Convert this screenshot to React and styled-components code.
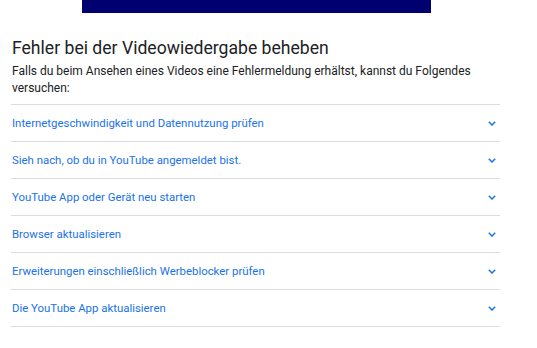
import React from "react";
import styled, { createGlobalStyle } from "styled-components";

const Global = createGlobalStyle`
  html, body { margin: 0; padding: 0; background: #fff; }
  body { font-family: Roboto, "Liberation Sans", sans-serif; }
`;

const Page = styled.div`
  width: 537px;
  height: 348px;
  overflow: hidden;
  display: flex;
  flex-direction: column;
`;

const Banner = styled.div`
  margin-left: 82px;
  width: 349px;
  height: 13px;
  background: #000070;
`;

const Content = styled.div`
  padding: 23px 37px 0 11px;
  display: flex;
  flex-direction: column;
`;

const Title = styled.h2`
  margin: 0 0 0 1px;
  font-family: Roboto, "Liberation Sans", sans-serif;
  font-weight: 400;
  font-size: 17.6px;
  line-height: 24px;
  color: #202124;
`;

const Intro = styled.p`
  margin: 3px 0 7px 1px;
  font-size: 12px;
  line-height: 17px;
  color: #202124;
`;

const List = styled.div`
  border-top: 1px solid #dadce0;
  display: flex;
  flex-direction: column;
`;

const Row = styled.div`
  height: 36px;
  border-bottom: 1px solid #dadce0;
  display: flex;
  align-items: center;
  justify-content: space-between;
  padding: 0 4px 0 1px;
`;

const Label = styled.span`
  font-size: 11.4px;
  color: #1a73e8;
`;

const Chevron = () => (
  <svg width="8" height="5" viewBox="0 0 8 5" fill="none">
    <path d="M0.8 0.8 L4 4 L7.2 0.8" stroke="#1a73e8" strokeWidth="1.5" />
  </svg>
);

const items = [
  "Internetgeschwindigkeit und Datennutzung prüfen",
  "Sieh nach, ob du in YouTube angemeldet bist.",
  "YouTube App oder Gerät neu starten",
  "Browser aktualisieren",
  "Erweiterungen einschließlich Werbeblocker prüfen",
  "Die YouTube App aktualisieren",
];

export default function App() {
  return (
    <Page>
      <Global />
      <Banner />
      <Content>
        <Title>Fehler bei der Videowiedergabe beheben</Title>
        <Intro>
          Falls du beim Ansehen eines Videos eine Fehlermeldung erhältst, kannst du Folgendes versuchen:
        </Intro>
        <List>
          {items.map((t) => (
            <Row key={t}>
              <Label>{t}</Label>
              <Chevron />
            </Row>
          ))}
        </List>
      </Content>
    </Page>
  );
}
